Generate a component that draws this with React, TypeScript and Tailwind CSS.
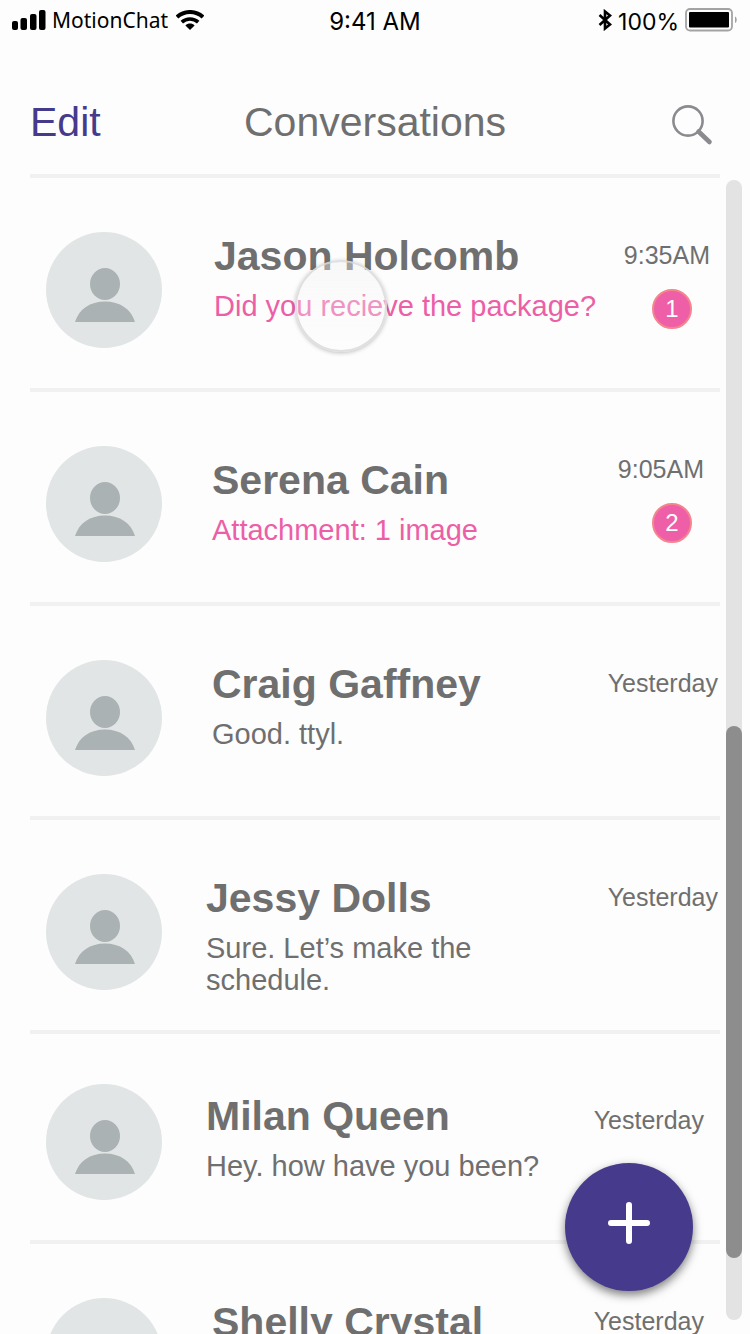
import React, { useState } from 'react';
import clsx from 'clsx';

interface Conversation {
  id: number;
  name: string;
  message: string;
  time: string;
  unread: number;
  // spacing classes for the row, the text block and the time
  row: string;
  text: string;
  meta: string;
  timePad: string;
}

const CONVERSATIONS: Conversation[] = [
  {
    id: 1,
    name: 'Jason Holcomb',
    message: 'Did you recieve the package?',
    time: '9:35AM',
    unread: 1,
    row: 'pt-[54px]',
    text: 'pl-[52px]',
    meta: 'pt-[7px]',
    timePad: 'pr-2.5',
  },
  {
    id: 2,
    name: 'Serena Cain',
    message: 'Attachment: 1 image',
    time: '9:05AM',
    unread: 2,
    row: 'pt-[54px]',
    text: 'pl-[50px] pt-2.5',
    meta: 'pt-[7px]',
    timePad: 'pr-4',
  },
  {
    id: 3,
    name: 'Craig Gaffney',
    message: 'Good. ttyl.',
    time: 'Yesterday',
    unread: 0,
    row: 'pt-[54px]',
    text: 'pl-[50px]',
    meta: 'pt-[7px]',
    timePad: 'pr-0.5',
  },
  {
    id: 4,
    name: 'Jessy Dolls',
    message: 'Sure. Let’s make the\nschedule.',
    time: 'Yesterday',
    unread: 0,
    row: 'pt-[54px]',
    text: 'pl-11',
    meta: 'pt-[7px]',
    timePad: 'pr-0.5',
  },
  {
    id: 5,
    name: 'Milan Queen',
    message: 'Hey. how have you been?',
    time: 'Yesterday',
    unread: 0,
    row: 'pt-[50px]',
    text: 'pl-11 pt-2',
    meta: 'pt-5',
    timePad: 'pr-4',
  },
  {
    id: 6,
    name: 'Shelly Crystal',
    message: '',
    time: 'Yesterday',
    unread: 0,
    row: 'pt-[54px]',
    text: 'pl-[50px]',
    meta: 'pt-[7px]',
    timePad: 'pr-4',
  },
];

function SignalIcon() {
  return (
    <svg width="34" height="20" viewBox="0 0 34 20" fill="#000" aria-hidden="true">
      <rect x="0" y="11" width="6" height="9" rx="2" />
      <rect x="8.500" y="8" width="6.500" height="12" rx="2" />
      <rect x="18" y="4" width="6.500" height="16" rx="2" />
      <rect x="27" y="0" width="6.500" height="20" rx="2" />
    </svg>
  );
}

function WifiIcon() {
  return (
    <svg className="ml-0.5" width="28" height="20" viewBox="0 0 28 20" fill="none" stroke="#000" strokeWidth="4" aria-hidden="true">
      <path d="M1 7C8.500 0.300 19.500 0.300 27 7" />
      <path d="M5.800 12.200C10.500 7.900 17.500 7.900 22.200 12.200" strokeWidth="3.600" />
      <path d="M14 20L9.400 15.400C12 12.900 16 12.900 18.600 15.400Z" fill="#000" stroke="none" />
    </svg>
  );
}

function BluetoothIcon() {
  return (
    <svg width="14" height="22" viewBox="0 0 14 22" fill="none" stroke="#000" strokeWidth="2.600" aria-hidden="true">
      <path d="M1.500 6L12 15.500L7 19.500V2.500L12 6.500L1.500 16" />
    </svg>
  );
}

function BatteryIcon() {
  return (
    <svg width="53" height="24" viewBox="0 0 53 24" aria-hidden="true">
      <rect x="1" y="1" width="46" height="21.500" rx="4" fill="none" stroke="#a3a3a3" strokeWidth="1.800" />
      <rect x="4" y="4" width="40" height="15.500" rx="1" fill="#000" />
      <path d="M50 8.500C52.300 9.500 52.300 14 50 15Z" fill="#a3a3a3" />
    </svg>
  );
}

function SearchIcon() {
  return (
    <svg width="42" height="42" viewBox="0 0 42 42" fill="none" stroke="#8b8b8f" aria-hidden="true">
      <circle cx="17" cy="17" r="14.600" strokeWidth="2.600" />
      <path d="M27.500 27.500L38.500 38" strokeWidth="4.600" strokeLinecap="round" />
    </svg>
  );
}

function Avatar() {
  return (
    <svg className="shrink-0 mb-1.5" width="116" height="116" viewBox="0 0 116 116" aria-hidden="true">
      <circle cx="58" cy="58" r="58" fill="#e1e5e6" />
      <ellipse cx="59" cy="52" rx="15" ry="16" fill="#abb2b3" />
      <path d="M29 90C33 77 44 69.500 59 69.500S85 77 89 90Z" fill="#abb2b3" />
    </svg>
  );
}

function StatusBar() {
  return (
    <div className="grid grid-cols-3 items-center h-10 px-3 text-black">
      <div className="flex items-center gap-1.5">
        <SignalIcon />
        <span className="font-['Noto_Sans',sans-serif] text-[21px] leading-6">MotionChat</span>
        <WifiIcon />
      </div>
      <span className="pt-1 text-center font-[Inter,sans-serif] text-2xl leading-7">9:41 AM</span>
      <div className="flex items-center justify-end gap-1.5">
        <BluetoothIcon />
        <span className="pt-1 font-[Inter,sans-serif] text-[23px] leading-7">100%</span>
        <BatteryIcon />
      </div>
    </div>
  );
}

function ConversationRow({ item }: { item: Conversation }) {
  const isUnread = item.unread > 0;
  return (
    <li className={clsx('flex items-start border-b-4 border-[#f1f1f1] pb-[34px] pl-4', item.row)}>
      <Avatar />
      <div className={clsx('flex-1 min-w-0 whitespace-nowrap', item.text)}>
        <h2 className="text-[41px] leading-12 font-bold">{item.name}</h2>
        {item.message && (
          <p className={clsx('pt-2.5 text-[29px] leading-8 whitespace-pre', isUnread && 'text-[#ec5fa7]')}>
            {item.message}
          </p>
        )}
      </div>
      <div className={clsx('flex flex-col items-end shrink-0', item.meta)}>
        <time className={clsx('text-[25px] leading-8', item.timePad)}>{item.time}</time>
        {isUnread && (
          <span className="mt-[18px] mr-7 flex size-10 items-center justify-center rounded-full border-2 border-[#f4858f] bg-[#ee5fa7] text-2xl text-white">
            {item.unread}
          </span>
        )}
      </div>
    </li>
  );
}

function App() {
  const [conversations] = useState<Conversation[]>(CONVERSATIONS);

  return (
    <div className="relative flex flex-col h-screen overflow-hidden bg-[#fdfdfd] font-['Liberation_Sans',Arial,sans-serif] text-[#6f6f6f]">
      <StatusBar />
      <header className="mx-[30px] grid shrink-0 grid-cols-3 items-center border-b-4 border-[#f1f1f1] pt-[58px] pb-7">
        <button type="button" className="justify-self-start text-[41px] leading-12 text-[#463a8c]">
          Edit
        </button>
        <h1 className="justify-self-center text-[41px] leading-12">Conversations</h1>
        <button type="button" aria-label="Search" className="justify-self-end pt-1.5 pr-[7px]">
          <SearchIcon />
        </button>
      </header>

      <main className="flex flex-1 min-h-0 pl-[30px] pr-2">
        <ul className="flex-1 min-w-0 overflow-hidden">
          {conversations.map(item => (
            <ConversationRow key={item.id} item={item} />
          ))}
        </ul>
        <div className="ml-1.5 mt-0.5 mb-3.5 grid w-4 shrink-0 grid-rows-[273fr_266fr_31fr] rounded-full bg-[#e3e3e3]">
          <div className="row-start-2 rounded-full bg-[#8d8d8d]" />
        </div>
      </main>

      {/* touch indicator */}
      <div className="absolute left-[295px] top-[260px] size-[92px] rounded-full border-2 border-[#d8d8d8]/80 bg-gradient-to-b from-[#f0f0f0]/40 to-white/30 shadow-[0_1px_4px_rgba(0,0,0,0.25)] pointer-events-none" />

      <button
        type="button"
        aria-label="New conversation"
        className="absolute right-[57px] bottom-[43px] flex size-32 items-center justify-center rounded-full bg-[#463a8c] pb-2 shadow-[0_4px_10px_rgba(0,0,0,0.5)]"
      >
        <svg width="42" height="42" viewBox="0 0 42 42" stroke="#fff" strokeWidth="6" strokeLinecap="round" aria-hidden="true">
          <path d="M21 3V39M3 21H39" />
        </svg>
      </button>
    </div>
  );
}

export default App;
